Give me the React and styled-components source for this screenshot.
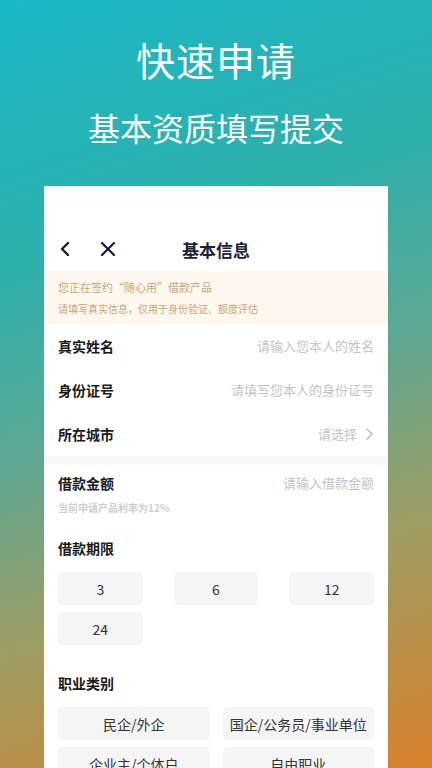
import React, { useState } from 'react'
import styled, { createGlobalStyle } from 'styled-components'

const GlobalStyle = createGlobalStyle`
  html, body {
    margin: 0;
    padding: 0;
  }
  body {
    font-family: "Noto Sans CJK SC", "Noto Sans", sans-serif;
  }
  * {
    box-sizing: border-box;
  }
`;

const terms = ['3', '6', '12', '24'];
const jobs = ['民企/外企', '国企/公务员/事业单位', '企业主/个体户', '自由职业'];

const fields = [
  { label: '真实姓名', placeholder: '请输入您本人的姓名' },
  { label: '身份证号', placeholder: '请填写您本人的身份证号' },
  { label: '所在城市', placeholder: '请选择', arrow: true },
];

const App = () => {
  const [term, setTerm] = useState(null);
  const [job, setJob] = useState(null);

  return (
    <Page>
      <GlobalStyle />
      <Header>
        <h1>快速申请</h1>
        <h2>基本资质填写提交</h2>
      </Header>
      <Card>
        <NavBar>
          <NavIcons>
            <svg width="14" height="16" viewBox="0 0 14 16">
              <path d="M10 2 L4 8 L10 14" fill="none" stroke="#161b33" strokeWidth="2.4" strokeLinecap="round" strokeLinejoin="round" />
            </svg>
            <svg width="16" height="16" viewBox="0 0 16 16">
              <path d="M2 2 L14 14 M14 2 L2 14" fill="none" stroke="#161b33" strokeWidth="2.2" strokeLinecap="round" />
            </svg>
          </NavIcons>
          <NavTitle>基本信息</NavTitle>
        </NavBar>
        <Notice>
          <p className="big">您正在签约“随心用”借款产品</p>
          <p>请填写真实信息，仅用于身份验证、额度评估</p>
        </Notice>
        {fields.map((f) => (
          <FieldRow key={f.label}>
            <Label>{f.label}</Label>
            <Placeholder>
              {f.placeholder}
              {f.arrow && (
                <svg width="9" height="14" viewBox="0 0 9 14">
                  <path d="M2 2 L7 7 L2 12" fill="none" stroke="#b8b8b8" strokeWidth="1.4" strokeLinecap="round" strokeLinejoin="round" />
                </svg>
              )}
            </Placeholder>
          </FieldRow>
        ))}
        <Band />
        <Section>
          <AmountRow>
            <Label>借款金额</Label>
            <Placeholder>请输入借款金额</Placeholder>
          </AmountRow>
          <Hint>当前申请产品利率为12%</Hint>
          <SectionTitle $top={23}>借款期限</SectionTitle>
          <ChipGrid $cols={3} $gap={31}>
            {terms.map((t, i) => (
              <Chip key={t} $active={term === i} onClick={() => setTerm(i)}>{t}</Chip>
            ))}
          </ChipGrid>
          <SectionTitle $top={28}>职业类别</SectionTitle>
          <ChipGrid $cols={2} $gap={13}>
            {jobs.map((j, i) => (
              <Chip key={j} $active={job === i} onClick={() => setJob(i)}>{j}</Chip>
            ))}
          </ChipGrid>
        </Section>
      </Card>
    </Page>
  )
}

const Page = styled.div`
  width: 432px;
  height: 768px;
  overflow: hidden;
  background: linear-gradient(162deg, #1ab8c6 0%, #2db0ab 30%, #5aa895 50%, #9c9d63 72%, #d8812b 100%);
  display: flex;
  flex-direction: column;
`;

const Header = styled.div`
  display: flex;
  flex-direction: column;
  align-items: center;
  padding-top: 39px;
  color: #fff;

  h1 {
    margin: 0;
    font-size: 39px;
    line-height: 40px;
    font-weight: 400;
    letter-spacing: 1px;
  }
  h2 {
    margin: 31px 0 0;
    font-size: 32px;
    line-height: 34px;
    font-weight: 400;
  }
`;

const Card = styled.div`
  margin: 42px 44px 0;
  background: #fff;
  flex: 1;
  padding-top: 41px;
`;

const NavBar = styled.div`
  position: relative;
  height: 44px;
  display: flex;
  align-items: center;
  justify-content: center;
`;

const NavIcons = styled.div`
  position: absolute;
  left: 14px;
  top: 14px;
  display: flex;
  align-items: center;
  gap: 28px;
`;

const NavTitle = styled.div`
  font-size: 17px;
  font-weight: 700;
  color: #1c2038;
`;

const Notice = styled.div`
  background: #fef8ef;
  height: 53px;
  padding: 6px 14px 0;

  p {
    margin: 0;
    color: #c9a779;
    font-size: 10px;
    line-height: 20px;
  }
  p.big {
    font-size: 11px;
    line-height: 20px;
    margin-bottom: 2px;
  }
`;

const FieldRow = styled.div`
  height: 44px;
  padding: 0 14px;
  display: flex;
  align-items: center;
  justify-content: space-between;
`;

const Label = styled.div`
  font-size: 14px;
  font-weight: 700;
  color: #1a1a1a;
  line-height: 20px;
`;

const Placeholder = styled.div`
  display: flex;
  align-items: center;
  gap: 8px;
  font-size: 13px;
  color: #c4c4c4;
  line-height: 20px;
`;

const Band = styled.div`
  height: 9px;
  background: #f7f7f7;
`;

const Section = styled.div`
  padding: 0 14px;
`;

const AmountRow = styled.div`
  height: 36px;
  display: flex;
  align-items: center;
  justify-content: space-between;
`;

const Hint = styled.div`
  font-size: 10px;
  font-weight: 700;
  color: #cfcfcf;
  line-height: 14px;
`;

const SectionTitle = styled(Label)`
  margin-top: ${(p) => p.$top}px;
  margin-bottom: 14px;
`;

const ChipGrid = styled.div`
  display: grid;
  grid-template-columns: repeat(${(p) => p.$cols}, 1fr);
  column-gap: ${(p) => p.$gap}px;
  row-gap: 7px;
`;

const Chip = styled.div`
  height: 33px;
  border-radius: 5px;
  background: ${(p) => (p.$active ? '#e6f6f7' : '#f5f5f5')};
  color: #333;
  font-size: 14px;
  display: flex;
  align-items: center;
  justify-content: center;
  cursor: pointer;
`;

export default App
